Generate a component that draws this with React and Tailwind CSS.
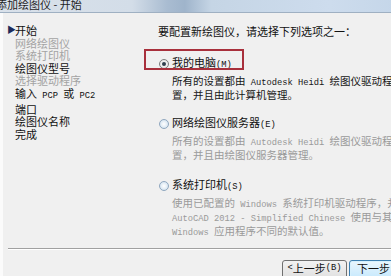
const cjk = { fontFamily: '"Noto Sans CJK SC", "Noto Sans CJK JP", sans-serif' };

const M = ({ children }) => (
  <span className="font-['Liberation_Mono',monospace] text-[8.75px]">{children}</span>
);

const navItems = [
  { label: "开始", active: true },
  { label: "网络绘图仪", dim: true },
  { label: "系统打印机", dim: true },
  { label: "绘图仪型号" },
  { label: "选择驱动程序", dim: true },
  {
    label: (
      <>
        输入<M> PCP </M>或<M> PC2</M>
      </>
    ),
  },
  { label: "端口" },
  { label: "绘图仪名称" },
  { label: "完成" },
];

const Radio = ({ checked }) => (
  <span
    className={`relative inline-flex h-[10px] w-[10px] shrink-0 items-center justify-center rounded-full border ${
      checked
        ? "border-[#7d7d7d] bg-[radial-gradient(circle,#ffffff_0%,#dcdcdc_100%)]"
        : "border-[#8fa7bf] bg-[radial-gradient(circle,#ffffff_0%,#c9dcec_100%)]"
    }`}
  >
    {checked && <span className="h-[4px] w-[4px] rounded-full bg-[#2f3e4c]" />}
  </span>
);

const Option = ({ checked, label, lines, dim, boxed }) => (
  <div>
    <div className="relative flex h-[13px] items-center gap-[3px] pl-[156px] leading-[13px]">
      <Radio checked={checked} />
      <span className="whitespace-nowrap text-[#111]">{label}</span>
      {boxed && (
        <span className="pointer-events-none absolute left-[141px] top-[-8px] h-[21px] w-[100px] border-2 border-[#a8303c]" />
      )}
    </div>
    <div
      className={`mt-[5px] pl-[169px] text-[10.5px] leading-[11px] ${
        dim ? "text-[#9a9a9a]" : "text-[#161616]"
      }`}
    >
      {lines.map((l, i) => (
        <div key={i} className="whitespace-nowrap">
          {l}
        </div>
      ))}
    </div>
  </div>
);

export default function App() {
  return (
    <div className="h-[276px] w-[391px] overflow-hidden bg-[#f0f0f0]" style={cjk}>
      <div className="w-[440px]">
        {/* title bar */}
        <div className="h-[14px] border-b border-[#9fb0c2] bg-[linear-gradient(90deg,#d9e1ea_0%,#d3dde8_30%,#a9bcd1_38%,#9fb4cb_42%,#c5d5e5_48%,#cddced_75%,#bfd2e6_100%)]">
          <div className="-ml-[4px] -mt-[1px] whitespace-nowrap text-[11px] leading-[11px] text-[#1e1e1e]">
            添加绘图仪 - 开始
          </div>
        </div>

        <div className="border-l-[3px] border-[#fbfbfb]">
          <div className="flex h-[235px]">
            {/* left steps */}
            <div className="w-0 shrink-0 pt-[11px] text-[11px] leading-[12.6px]">
              {navItems.map((it, i) => (
                <div
                  key={i}
                  className={`relative whitespace-nowrap pl-[12px] ${
                    it.dim ? "text-[#a3a3a3]" : "text-[#111]"
                  }`}
                >
                  {it.active && (
                    <span className="absolute left-[4px] top-0 text-[9px] text-[#1c2a5a]">▶</span>
                  )}
                  {it.label}
                </div>
              ))}
            </div>

            {/* right panel */}
            <div className="flex-1 pt-[12px] text-[11px]">
              <div className="whitespace-nowrap pl-[155px] leading-[13px] text-[#111]">
                要配置新绘图仪，请选择下列选项之一：
              </div>
              <div className="mt-[19px]">
                <Option
                  checked
                  boxed
                  label={
                    <>
                      我的电脑<M>(M)</M>
                    </>
                  }
                  lines={[
                    <>
                      所有的设置都由<M> Autodesk Heidi </M>绘图仪驱动程序配
                    </>,
                    "置，并且由此计算机管理。",
                  ]}
                />
              </div>
              <div className="mt-[17px]">
                <Option
                  dim
                  label={
                    <>
                      网络绘图仪服务器<M>(E)</M>
                    </>
                  }
                  lines={[
                    <>
                      所有的设置都由<M> Autodesk Heidi </M>绘图仪驱动程序配
                    </>,
                    "置，并且由绘图仪服务器管理。",
                  ]}
                />
              </div>
              <div className="mt-[19px]">
                <Option
                  dim
                  label={
                    <>
                      系统打印机<M>(S)</M>
                    </>
                  }
                  lines={[
                    <>
                      使用已配置的<M> Windows </M>系统打印机驱动程序，并
                    </>,
                    <>
                      <M>AutoCAD 2012 - Simplified Chinese </M>使用与其他
                    </>,
                    <>
                      <M>Windows </M>应用程序不同的默认值。
                    </>,
                  ]}
                />
              </div>
            </div>
          </div>

          {/* separator */}
          <div className="ml-[5px] border-t border-b border-t-[#a0a0a0] border-b-[#ffffff]" />

          {/* buttons */}
          <div className="mt-[10px] flex gap-[2px] pl-[279px] text-[11px]">
            <button
              type="button"
              className="flex h-[23px] w-[65px] items-start justify-center rounded-[3px] border border-[#707070] bg-[linear-gradient(#f2f2f2,#dcdcdc)] pt-[1px] leading-[13px] text-[#111]"
            >
              <M>&lt; </M>上一步<M>(B)</M>
            </button>
            <button
              type="button"
              className="flex h-[23px] w-[65px] items-start justify-center rounded-[3px] border border-[#3c7fb1] bg-[linear-gradient(#eaf6fd,#bee6fd)] pt-[1px] leading-[13px] text-[#111] shadow-[inset_0_0_0_1px_#d6f0fc]"
            >
              下一步<M>(N)</M>
            </button>
          </div>
        </div>
      </div>
    </div>
  );
}
